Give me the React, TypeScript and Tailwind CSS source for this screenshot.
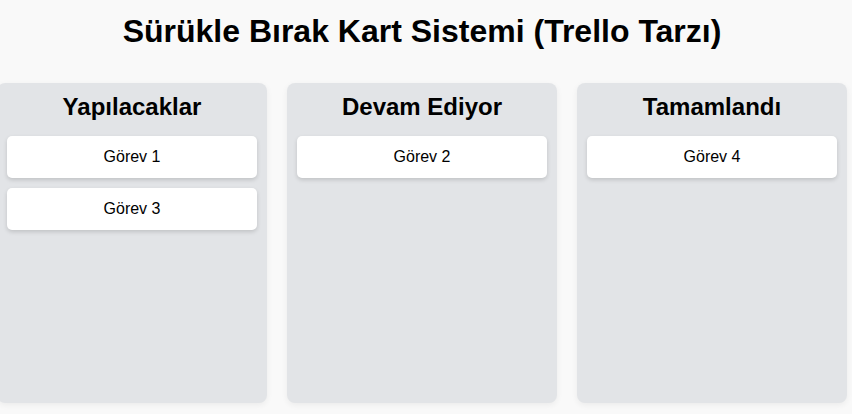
const columns = [
  { title: "Yapılacaklar", cards: ["Görev 1", "Görev 3"] },
  { title: "Devam Ediyor", cards: ["Görev 2"] },
  { title: "Tamamlandı", cards: ["Görev 4"] },
];

export default function App() {
  return (
    <div className="min-h-screen w-full overflow-hidden bg-[#f9f9f9] pr-[8px] font-['Liberation_Sans',Arial,sans-serif] text-black">
      <h1 className="pt-[13px] text-center text-[32px] font-bold leading-[37px]">
        Sürükle Bırak Kart Sistemi (Trello Tarzı)
      </h1>

      <div className="mt-[33px] flex justify-center gap-[20px]">
        {columns.map((col) => (
          <div
            key={col.title}
            className="h-[320px] w-[270px] shrink-0 rounded-[8px] bg-[#e2e4e7] p-[10px] shadow-[0_2px_6px_rgba(0,0,0,0.06)]"
          >
            <h2 className="mb-[15px] text-center text-[24px] font-bold leading-[27.6px]">
              {col.title}
            </h2>
            <div className="flex flex-col gap-[10px]">
              {col.cards.map((card) => (
                <div
                  key={card}
                  className="rounded-[5px] bg-white p-[12px] text-center text-[16px] leading-[18.4px] shadow-[0_2px_4px_rgba(0,0,0,0.15)]"
                >
                  {card}
                </div>
              ))}
            </div>
          </div>
        ))}
      </div>
    </div>
  );
}
